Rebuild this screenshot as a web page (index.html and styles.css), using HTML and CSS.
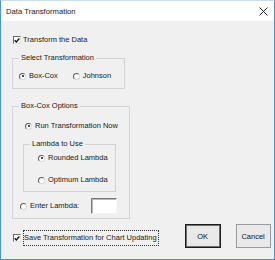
FILE: index.html
```html
<!DOCTYPE html>
<html lang="en">

<head>
  <meta charset="UTF-8" />
  <title>Data Transformation</title>
  <link rel="stylesheet" href="styles.css">
</head>

<body>
  <div class="window">
    <div class="title_bar">
      <span class="title_text">Data Transformation</span>
      <svg class="close_icon" width="9" height="9" viewBox="0 0 9 9">
        <path d="M0.5 0.5 L8.5 8.5 M8.5 0.5 L0.5 8.5" stroke="#222" stroke-width="1" />
      </svg>
    </div>

    <div class="dialog_body">
      <!-- Transform checkbox -->
      <div class="check_row first_row">
        <span class="check_box checked">
          <svg width="7" height="7" viewBox="0 0 7 7"><path d="M0.8 3.3 L2.7 5.3 L6.2 1.2" stroke="#111" stroke-width="1.6" fill="none" /></svg>
        </span>
        <span>Transform the Data</span>
      </div>

      <fieldset class="group group_select">
        <legend>Select Transformation</legend>
        <div class="radio_line">
          <div class="radio_row"><span class="radio on"></span><span>Box-Cox</span></div>
          <div class="radio_row johnson"><span class="radio"></span><span>Johnson</span></div>
        </div>
      </fieldset>

      <fieldset class="group group_options">
        <legend>Box-Cox Options</legend>
        <div class="radio_row run_now"><span class="radio on"></span><span>Run Transformation Now</span></div>

        <fieldset class="group group_lambda">
          <legend>Lambda to Use</legend>
          <div class="radio_row lambda_opt"><span class="radio on"></span><span>Rounded Lambda</span></div>
          <div class="radio_row lambda_opt second"><span class="radio"></span><span>Optimum Lambda</span></div>
        </fieldset>

        <div class="radio_row enter_row">
          <span class="radio"></span><span class="enter_label">Enter Lambda:</span>
          <span class="text_box"></span>
        </div>
      </fieldset>

      <div class="bottom_row">
        <div class="check_row save_row">
          <span class="check_box checked">
            <svg width="7" height="7" viewBox="0 0 7 7"><path d="M0.8 3.3 L2.7 5.3 L6.2 1.2" stroke="#111" stroke-width="1.6" fill="none" /></svg>
          </span>
          <span class="focus_text">Save Transformation for Chart Updating</span>
        </div>
        <button class="dlg_btn ok_btn">OK</button>
        <button class="dlg_btn cancel_btn">Cancel</button>
      </div>
    </div>
  </div>
</body>

</html>
```

FILE: styles.css
```css
body {
  margin: 0;
  font-family: 'Liberation Sans', Arial, sans-serif;
  font-size: 7.5px;
  color: #1a1a1a;
}

.window {
  width: 275px;
  height: 260px;
  box-sizing: border-box;
  border: 1px solid #4f8fd6;
  border-top-color: #c9dcf0;
  background: #f0f0f0;
  display: flex;
  flex-direction: column;
}

.title_bar {
  height: 20px;
  background: #fff;
  display: flex;
  align-items: center;
  justify-content: space-between;
  padding: 0 6px 0 5px;
}

.title_text {
  font-size: 7.7px;
}

.dialog_body {
  padding: 0 6px 0 11px;
  line-height: 10px;
  white-space: nowrap;
}

.check_row {
  display: flex;
  align-items: center;
  gap: 2px;
}

.first_row {
  margin-top: 14px;
}

.check_box {
  width: 8px;
  height: 8px;
  margin-left: 1px;
  box-sizing: border-box;
  background: #fff;
  border: 1px solid;
  border-color: #6b6b6b #e3e3e3 #e3e3e3 #6b6b6b;
  display: flex;
  align-items: center;
  justify-content: center;
  flex-shrink: 0;
}

.group {
  margin: 0;
  border: 1px solid #d3d3d3;
  padding: 0 6px;
}

.group legend {
  padding: 0 2px;
  line-height: 10px;
}

.group_select {
  width: 113px;
  box-sizing: border-box;
  margin-top: 8px;
  padding-top: 8px;
  padding-bottom: 7px;
}

.radio_line {
  display: flex;
  gap: 16px;
}

.radio_row {
  display: flex;
  align-items: center;
  gap: 3px;
  height: 10px;
}

.radio {
  width: 7px;
  height: 7px;
  box-sizing: border-box;
  border-radius: 50%;
  border: 1px solid;
  border-color: #5c5c5c #d8d8d8 #d8d8d8 #5c5c5c;
  background: #fff;
  position: relative;
  flex-shrink: 0;
}

.radio.on::after {
  content: "";
  position: absolute;
  left: 1.5px;
  top: 1.5px;
  width: 2px;
  height: 2px;
  border-radius: 50%;
  background: #111;
}

.johnson {
  margin-left: -1px;
}

.group_options {
  width: 118px;
  box-sizing: border-box;
  margin-top: 12px;
  padding-top: 10px;
  padding-bottom: 4px;
}

.run_now {
  margin-left: 6px;
}

.group_lambda {
  width: 93px;
  box-sizing: border-box;
  margin: 8px 0 0 4px;
  padding-top: 4px;
  padding-bottom: 6px;
}

.lambda_opt {
  margin-left: 8px;
}

.lambda_opt.second {
  margin-top: 12px;
}

.enter_row {
  margin: 6px 0 0 1px;
  height: 16px;
}

.text_box {
  width: 26px;
  height: 16px;
  box-sizing: border-box;
  margin-left: 9px;
  background: #fff;
  border: 1px solid;
  border-color: #7a7a7a #f6f6f6 #f6f6f6 #7a7a7a;
  box-shadow: inset 1px 1px 0 #b8b8b8;
}

.bottom_row {
  display: flex;
  align-items: flex-start;
  margin-top: 5px;
}

.save_row {
  margin-top: 6px;
  flex-shrink: 0;
}

.focus_text {
  border: 1px dotted #333;
  padding: 2px 1px 2px 0;
}

.dlg_btn {
  font-family: 'Liberation Sans', Arial, sans-serif;
  font-size: 7.5px;
  color: #111;
  height: 24px;
  padding: 0;
  background: #e9e9e9;
  box-sizing: border-box;
  flex-shrink: 0;
}

.ok_btn {
  width: 36px;
  margin-left: 26px;
  border: 1px solid #1e1e1e;
  box-shadow: inset 0 0 0 1px #6e6e6e;
}

.cancel_btn {
  width: 35px;
  margin-left: 15px;
  border: 1px solid #9a9a9a;
}
```
